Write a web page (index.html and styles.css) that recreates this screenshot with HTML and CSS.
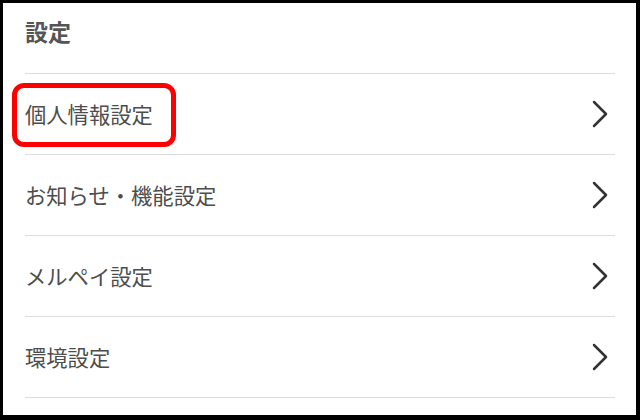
FILE: index.html
```html
<!DOCTYPE html>
<html lang="ja">
<head>
<meta charset="utf-8">
<link rel="stylesheet" href="styles.css">
</head>
<body>
<div class="screen">
  <div class="header">設定</div>
  <ul class="list">
    <li class="row">
      <span class="label">個人情報設定</span>
      <svg class="chev" viewBox="0 0 16 28" width="16" height="28"><path d="M2 2 L14 14 L2 26" fill="none" stroke="#333" stroke-width="2.5" stroke-linecap="round" stroke-linejoin="round"/></svg>
      <span class="highlight"></span>
    </li>
    <li class="row">
      <span class="label">お知らせ・機能設定</span>
      <svg class="chev" viewBox="0 0 16 28" width="16" height="28"><path d="M2 2 L14 14 L2 26" fill="none" stroke="#333" stroke-width="2.5" stroke-linecap="round" stroke-linejoin="round"/></svg>
    </li>
    <li class="row">
      <span class="label">メルペイ設定</span>
      <svg class="chev" viewBox="0 0 16 28" width="16" height="28"><path d="M2 2 L14 14 L2 26" fill="none" stroke="#333" stroke-width="2.5" stroke-linecap="round" stroke-linejoin="round"/></svg>
    </li>
    <li class="row">
      <span class="label">環境設定</span>
      <svg class="chev" viewBox="0 0 16 28" width="16" height="28"><path d="M2 2 L14 14 L2 26" fill="none" stroke="#333" stroke-width="2.5" stroke-linecap="round" stroke-linejoin="round"/></svg>
    </li>
  </ul>
</div>
</body>
</html>
```
FILE: styles.css
```css
html, body {
  margin: 0;
  padding: 0;
  background: #000;
}
body {
  width: 640px;
  height: 420px;
  overflow: hidden;
  font-family: "Noto Sans CJK JP", "Noto Sans", sans-serif;
}
.screen {
  margin: 3px 4px 0 3px;
  height: 412px;
  background: #fff;
  overflow: hidden;
}
.header {
  height: 70px;
  box-sizing: border-box;
  padding: 16px 0 0 22px;
  font-size: 23px;
  line-height: 24px;
  font-weight: bold;
  color: #555;
}
.list {
  list-style: none;
  margin: 0 21px 0 22px;
  padding: 0;
  border-bottom: 1px solid #ddd;
}
.row {
  position: relative;
  height: 80px;
  border-top: 1px solid #ddd;
  display: flex;
  align-items: center;
  justify-content: space-between;
  padding-right: 7px;
}
.label {
  font-size: 21.3px;
  line-height: 24px;
  color: #4d4d4d;
}
.chev {
  display: block;
}
.highlight {
  position: absolute;
  left: -13px;
  top: 9px;
  width: 164px;
  height: 64px;
  box-sizing: border-box;
  border: 5px solid #f00;
  border-radius: 12px;
}
```
